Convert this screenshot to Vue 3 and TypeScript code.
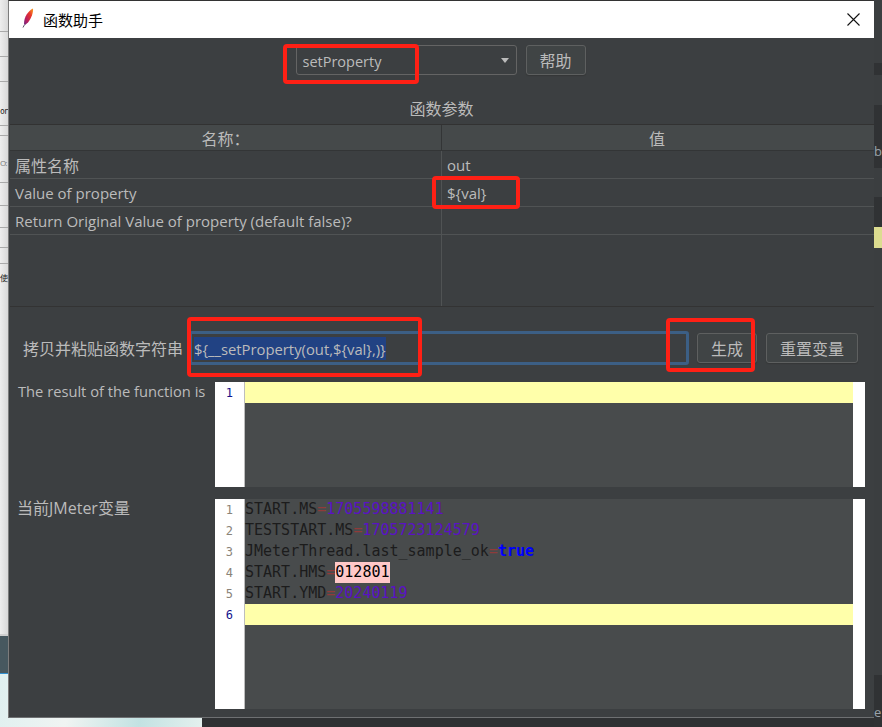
<template>
  <div class="screen">
    <!-- what is behind the dialog -->
    <div class="desk-left">
      <div v-for="y in leftLines" :key="y" class="desk-line" :style="{ top: y + 'px' }"></div>
      <span class="peek peek-or">or</span>
      <span class="peek peek-o">O:</span>
      <span class="peek peek-use">使</span>
      <div class="desk-dark"></div>
    </div>
    <div class="desk-bottom"></div>
    <div class="desk-right">
      <div class="right-dark right-a"></div>
      <div class="right-dark right-b"></div>
      <div class="right-dark right-c"></div>
      <div class="right-dark right-d"></div>
      <div class="right-yellow"></div>
      <span class="peek-b">b</span>
      <span class="peek-e">e</span>
    </div>

    <div class="window">
      <div class="titlebar">
        <svg class="feather" width="12" height="20" viewBox="0 0 12 20">
          <defs>
            <linearGradient id="featherFill" x1="1" y1="0" x2="0" y2="1">
              <stop offset="0" stop-color="#f7a21d" />
              <stop offset="0.35" stop-color="#e8352b" />
              <stop offset="0.7" stop-color="#b81e5e" />
              <stop offset="1" stop-color="#6a2a86" />
            </linearGradient>
          </defs>
          <path d="M11 0.5C11.5 4 9.5 10 6 14.5L3 17L2 15.5C2 9 6 3 11 0.5Z" fill="url(#featherFill)" />
          <path d="M2.6 16.5L1 19.5" stroke="#332244" stroke-width="0.8" fill="none" />
        </svg>
        <span class="title">函数助手</span>
        <svg class="close" width="13" height="13" viewBox="0 0 13 13">
          <path d="M0.5 0.5L12.5 12.5M12.5 0.5L0.5 12.5" stroke="#111" stroke-width="1.1" fill="none" />
        </svg>
      </div>

      <div class="body">
        <div class="func-row">
          <div class="combo">
            <span class="combo-text">setProperty</span>
            <i class="arrow"></i>
          </div>
          <button class="btn btn-help" type="button">帮助</button>
        </div>

        <div class="params-title">函数参数</div>

        <div class="table">
          <div class="thead">
            <div class="th th-name">名称：</div>
            <div class="th th-value">值</div>
          </div>
          <div class="tbody">
            <div v-for="row in params" :key="row.name" class="tr">
              <div class="td td-name" :class="{ cjk: row.cjk }">{{ row.name }}</div>
              <div class="td td-value">{{ row.value }}</div>
            </div>
          </div>
        </div>

        <div class="gen-row">
          <label class="gen-label">拷贝并粘贴函数字符串</label>
          <div class="gen-input"><span class="selected">${__setProperty(out,${val},)}</span></div>
          <button class="btn btn-gen" type="button">生成</button>
          <button class="btn btn-reset" type="button">重置变量</button>
        </div>

        <div class="editor-row result-row">
          <div class="editor-label latin">The result of the function is</div>
          <div class="editor">
            <div class="gutter">
              <div class="ln active">1</div>
            </div>
            <div class="code">
              <div class="line current"></div>
            </div>
            <div class="edge"></div>
          </div>
        </div>

        <div class="editor-row vars-row">
          <div class="editor-label vars-label">当前JMeter变量</div>
          <div class="editor">
            <div class="gutter">
              <div v-for="n in 6" :key="n" class="ln" :class="{ active: n === 6 }">{{ n }}</div>
            </div>
            <div class="code">
              <div v-for="v in vars" :key="v.key" class="line">
                <span class="k">{{ v.key }}</span><span class="eq">=</span><span :class="v.kind">{{ v.val }}</span>
              </div>
              <div class="line current"></div>
            </div>
            <div class="edge"></div>
          </div>
        </div>
      </div>
    </div>

    <!-- red boxes drawn on the screenshot -->
    <div class="mark mark-combo"></div>
    <div class="mark mark-val"></div>
    <div class="mark mark-input"></div>
    <div class="mark mark-gen"></div>
  </div>
</template>

<script setup lang="ts">
interface ParamRow {
  name: string
  value: string
  cjk?: boolean
}

interface VarLine {
  key: string
  val: string
  kind: 'num' | 'bool' | 'str'
}

const leftLines = [31, 56, 81, 125, 135, 182, 205, 227, 247, 263]

const params: ParamRow[] = [
  { name: '属性名称', value: 'out', cjk: true },
  { name: 'Value of property', value: '${val}' },
  { name: 'Return Original Value of property (default false)?', value: '' },
]

const vars: VarLine[] = [
  { key: 'START.MS', val: '1705598881141', kind: 'num' },
  { key: 'TESTSTART.MS', val: '1705723124579', kind: 'num' },
  { key: 'JMeterThread.last_sample_ok', val: 'true', kind: 'bool' },
  { key: 'START.HMS', val: '012801', kind: 'str' },
  { key: 'START.YMD', val: '20240119', kind: 'num' },
]
</script>

<style>
html,
body {
  margin: 0;
  background: #2f3133;
}
</style>

<style scoped>
.screen {
  position: relative;
  width: 882px;
  height: 727px;
  overflow: hidden;
  background: #2f3133;
  font-family: "Open Sans", "Noto Sans CJK SC", sans-serif;
  font-size: 15px;
  color: #bbbbbb;
}

/* background */
.desk-left {
  position: absolute;
  left: 0;
  top: 0;
  width: 9px;
  height: 727px;
  background: linear-gradient(90deg, #eeeeee, #d6d6d6);
}

.desk-line {
  position: absolute;
  left: 0;
  width: 9px;
  height: 1px;
  background: #a9a9a9;
}

.peek {
  position: absolute;
  left: 0;
  color: #222;
  font-size: 8px;
  line-height: 12px;
  white-space: nowrap;
}

.peek-or {
  top: 106px;
  font-family: "DejaVu Sans Mono", monospace;
  letter-spacing: -1px;
}

.peek-o {
  top: 157px;
  color: #777;
  letter-spacing: -1px;
}

.peek-use {
  top: 272px;
}

.desk-dark {
  position: absolute;
  left: 0;
  top: 634px;
  width: 9px;
  height: 40px;
  box-sizing: border-box;
  background: #47585f;
  border-top: 2px solid #cfcfcf;
  border-bottom: 1px solid #2f8fd0;
}

.desk-bottom {
  position: absolute;
  left: 0;
  top: 674px;
  width: 202px;
  height: 53px;
  background: linear-gradient(100deg, #dff0f0 0%, #f0f4f2 35%, #c2e2e2 70%, #e4f0ee 100%);
}

.desk-right {
  position: absolute;
  left: 874px;
  top: 0;
  width: 8px;
  height: 727px;
  background: #3b3e40;
}

.right-dark {
  position: absolute;
  left: 0;
  width: 8px;
  background: #303234;
}

.right-a {
  top: 63px;
  height: 12px;
}

.right-b {
  top: 105px;
  height: 63px;
}

.right-c {
  top: 197px;
  height: 30px;
}

.right-d {
  top: 675px;
  height: 52px;
}

.right-yellow {
  position: absolute;
  left: 0;
  top: 227px;
  width: 8px;
  height: 21px;
  background: #dcdc90;
}

.peek-b,
.peek-e {
  position: absolute;
  left: 0;
  line-height: 16px;
  font-size: 13px;
  color: #9aa3aa;
}

.peek-b {
  top: 143px;
}

.peek-e {
  top: 704px;
}

/* dialog */
.window {
  position: absolute;
  left: 8px;
  top: 0;
  width: 866px;
  height: 718px;
  box-sizing: border-box;
  display: flex;
  flex-direction: column;
  border-top: 1px solid #333;
  border-left: 1px solid #7c7c7c;
  border-bottom: 1px solid #6e7072;
  background: #3c3f41;
}

.titlebar {
  height: 37px;
  flex: none;
  display: flex;
  align-items: center;
  background: #fff;
  color: #000;
  padding-left: 13px;
}

.feather {
  flex: none;
  margin-top: -3px;
}

.title {
  margin-left: 9px;
  font-family: "Noto Sans CJK SC", sans-serif;
  font-size: 15px;
}

.close {
  margin-left: auto;
  margin-right: 14px;
  margin-top: -1px;
}

.body {
  flex: 1;
  display: flex;
  flex-direction: column;
  min-height: 0;
}

.func-row {
  display: flex;
  justify-content: center;
  gap: 9px;
  padding: 7px 2px 0 0;
  height: 30px;
}

.combo {
  width: 221px;
  box-sizing: border-box;
  border: 1px solid #646464;
  border-radius: 3px;
  display: flex;
  align-items: center;
  justify-content: space-between;
  padding: 0 7px 0 6px;
  background: #3c3f41;
  color: #bbb;
  font-size: 14.5px;
}

.combo-text {
  padding-top: 2px;
}

.arrow {
  width: 0;
  height: 0;
  border-left: 4px solid transparent;
  border-right: 4px solid transparent;
  border-top: 5px solid #bbb;
}

.btn {
  box-sizing: border-box;
  border: 1px solid #5e6060;
  border-radius: 3px;
  background: #404445;
  color: #bbb;
  font-family: "Noto Sans CJK SC", sans-serif;
  font-size: 16px;
  padding: 0;
  height: 30px;
  box-shadow: 0 1px 1px #353738;
}

.btn-help,
.btn-gen {
  width: 60px;
}

.params-title {
  height: 49px;
  box-sizing: border-box;
  padding-top: 21px;
  text-align: center;
  font-family: "Noto Sans CJK SC", sans-serif;
  font-size: 16px;
  line-height: 24px;
}

.table {
  margin-left: 1px;
  width: 864px;
  height: 183px;
  flex: none;
  box-sizing: border-box;
  border-top: 1px solid #323232;
  border-bottom: 1px solid #333;
  display: flex;
  flex-direction: column;
}

.thead {
  display: flex;
  height: 26px;
  flex: none;
  box-sizing: border-box;
  background: #45494a;
  border-bottom: 1px solid #333536;
}

.th {
  text-align: center;
  font-family: "Noto Sans CJK SC", sans-serif;
  font-size: 16px;
  line-height: 26px;
}

.th-name,
.td-name {
  width: 432px;
  flex: none;
  box-sizing: border-box;
}

.th-name {
  border-right: 1px solid #333536;
}

.th-value {
  flex: 1;
  text-align: center;
  padding-right: 2px;
}

.tbody {
  flex: 1;
  background: linear-gradient(#505354, #505354) 431px 0 / 1px 100% no-repeat;
}

.tr {
  display: flex;
  height: 28px;
  box-sizing: border-box;
  border-bottom: 1px solid #505354;
}

.td {
  padding-top: 1px;
  line-height: 26px;
  white-space: nowrap;
}

.td-name {
  padding-left: 5px;
  font-size: 15px;
}

.td-name.cjk {
  font-family: "Noto Sans CJK SC", sans-serif;
  font-size: 16px;
}

.td-value {
  padding-left: 5px;
  flex: 1;
  font-size: 15px;
}

.gen-row {
  display: flex;
  align-items: center;
  margin-top: 24px;
  height: 34px;
  flex: none;
  padding-left: 14px;
}

.gen-label {
  width: 166px;
  flex: none;
  font-family: "Noto Sans CJK SC", sans-serif;
  font-size: 16px;
  white-space: nowrap;
}

.gen-input {
  width: 500px;
  height: 34px;
  flex: none;
  box-sizing: border-box;
  border: 3px solid #3c5f85;
  border-radius: 3px;
  background: #3c3f41;
  padding-left: 2px;
  display: flex;
  align-items: center;
}

.selected {
  background: #214283;
  color: #bbb;
  font-size: 14.8px;
  padding-top: 1px;
  line-height: 22px;
  white-space: nowrap;
}

.btn-gen {
  margin-left: 8px;
}

.btn-reset {
  margin-left: 9px;
  width: 92px;
}

.editor-row {
  display: flex;
  flex: none;
  padding-left: 9px;
}

.result-row {
  margin-top: 17px;
  height: 105px;
}

.vars-row {
  margin-top: 12px;
  height: 210px;
}

.editor-label {
  width: 197px;
  flex: none;
  font-family: "Open Sans", "Noto Sans CJK SC", sans-serif;
  font-size: 16px;
  line-height: 20px;
  white-space: nowrap;
}

.editor-label.latin {
  font-size: 14.7px;
  line-height: 18px;
}

.vars-label {
  line-height: 18px;
  margin-left: -1px;
  margin-right: 1px;
}

.editor {
  width: 650px;
  flex: none;
  display: flex;
  background: #484b4c;
  font-family: "DejaVu Sans Mono", monospace;
  font-size: 15px;
}

.gutter {
  width: 30px;
  flex: none;
  box-sizing: border-box;
  background: #fff;
  border-right: 1px solid #bdbdbd;
}

.ln {
  height: 21px;
  line-height: 22px;
  font-size: 12px;
  padding-right: 11px;
  text-align: right;
  color: #8a8378;
}

.ln.active {
  color: #14148c;
}

.code {
  flex: 1;
  min-width: 0;
}

.line {
  height: 21px;
  line-height: 21px;
  white-space: pre;
  color: #1c1c1c;
}

.line.current {
  background: #ffffaa;
}

.k {
  color: #1c1c1c;
}

.eq {
  color: #8f3b3b;
}

.num {
  color: #5a12c4;
}

.bool {
  color: #0000ff;
  font-weight: 700;
}

.str {
  color: #000;
  background: #ffc8c8;
  display: inline-block;
  height: 21px;
}

.edge {
  width: 12px;
  flex: none;
  background: #fff;
}

/* annotations */
.mark {
  position: absolute;
  box-sizing: border-box;
  border: 4px solid #ff2015;
  border-radius: 4px;
}

.mark-combo {
  left: 283px;
  top: 44px;
  width: 136px;
  height: 40px;
}

.mark-val {
  left: 432px;
  top: 176px;
  width: 88px;
  height: 33px;
}

.mark-input {
  left: 187px;
  top: 317px;
  width: 235px;
  height: 60px;
}

.mark-gen {
  left: 666px;
  top: 318px;
  width: 89px;
  height: 54px;
}
</style>
